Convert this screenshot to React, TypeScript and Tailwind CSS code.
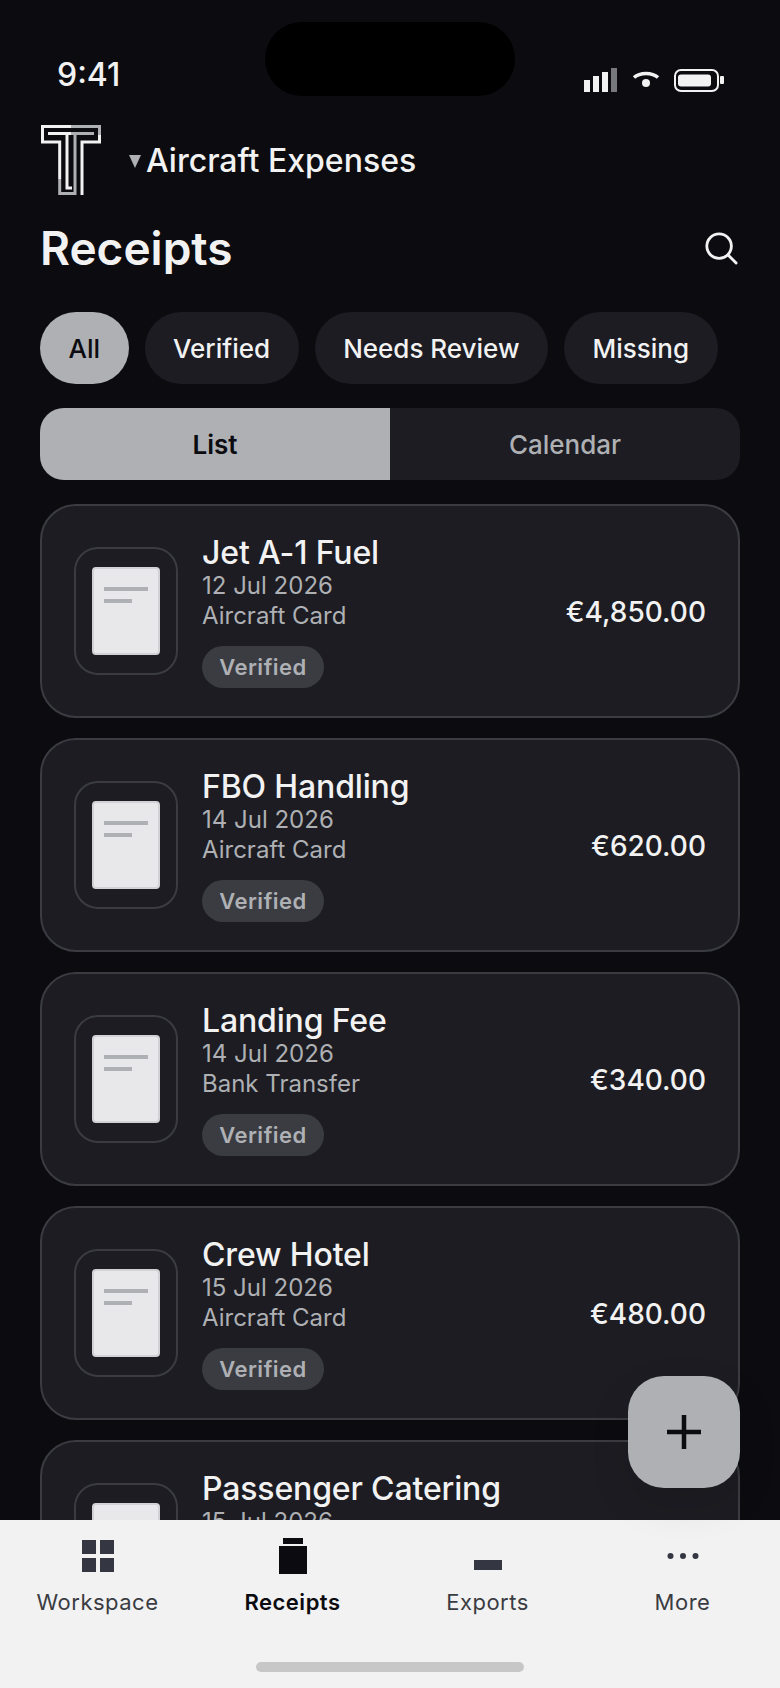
const font = { fontFamily: "Inter, 'Liberation Sans', sans-serif" };

type R = { title: string; date: string; method: string; amount: string };
const rows: R[] = [
  { title: "Jet A-1 Fuel", date: "12 Jul 2026", method: "Aircraft Card", amount: "€4,850.00" },
  { title: "FBO Handling", date: "14 Jul 2026", method: "Aircraft Card", amount: "€620.00" },
  { title: "Landing Fee", date: "14 Jul 2026", method: "Bank Transfer", amount: "€340.00" },
  { title: "Crew Hotel", date: "15 Jul 2026", method: "Aircraft Card", amount: "€480.00" },
  { title: "Passenger Catering", date: "15 Jul 2026", method: "Aircraft Card", amount: "€1,120.00" },
];

function Logo() {
  return (
    <svg width="60" height="70" viewBox="0 0 60 70" fill="none" strokeWidth="3" strokeLinecap="butt" className="ml-[1px]">
      <path d="M30 1.5H1.5V17H18.7V54" stroke="#f2f2f2" />
      <path d="M30 1.5H58.5V10" stroke="#aeb0b4" />
      <path d="M58.5 10V17H41V70" stroke="#f2f2f2" />
      <path d="M18.7 54V68.5H34V8.5" stroke="#aeb0b4" />
      <path d="M7 8.5H30" stroke="#f2f2f2" />
      <path d="M30 8.5H53" stroke="#aeb0b4" />
      <path d="M26 8.5V63H31" stroke="#f2f2f2" />
    </svg>
  );
}

function StatusIcons() {
  return (
    <svg width="142" height="28" viewBox="0 0 142 28" fill="none">
      <rect x="0" y="12" width="6" height="12" fill="#f2f2f2" />
      <rect x="9" y="8" width="6" height="16" fill="#f2f2f2" />
      <rect x="18" y="4" width="6" height="20" fill="#f2f2f2" />
      <rect x="27" y="0" width="6" height="24" fill="#77797d" />
      <path d="M50 9.5C56 4 68 4 74 9.5" stroke="#f2f2f2" strokeWidth="3.5" />
      <circle cx="62" cy="15" r="4" fill="#f2f2f2" />
      <rect x="91" y="2" width="43" height="21" rx="6" stroke="#f2f2f2" strokeWidth="2" />
      <rect x="94" y="6.5" width="33" height="12" rx="3" fill="#f2f2f2" />
      <rect x="136" y="8" width="4" height="8" rx="1" fill="#f2f2f2" />
    </svg>
  );
}

function Card({ r }: { r: R }) {
  return (
    <div className="flex items-center shrink-0 h-[214px] rounded-[36px] border-2 border-[#3a3c42] bg-[#1c1c22] pl-8 pr-8">
      <div className="flex items-center justify-center w-[104px] h-[128px] shrink-0 rounded-[24px] border-2 border-[#3a3c42]">
        <div className="w-[68px] h-[88px] rounded-[4px] border-2 border-[#d1d1d6] bg-[#e8e8ea] pt-[18px] pl-[10px]">
          <div className="w-[44px] h-[4px] bg-[#aeb0b4]" />
          <div className="w-[28px] h-[4px] bg-[#aeb0b4] mt-2" />
        </div>
      </div>
      <div className="ml-[24px] flex flex-col items-start pt-[1px]">
        <div className="text-[32px] leading-[36px] font-medium tracking-[-0.15px] text-[#f2f2f2]">{r.title}</div>
        <div className="text-[24px] leading-[30px] text-[#aeb0b4]">{r.date}</div>
        <div className="text-[24px] leading-[30px] text-[#aeb0b4]">{r.method}</div>
        <div className="mt-[15px] flex items-center justify-center w-[122px] h-[42px] pt-[1px] rounded-full bg-[#3a3c42] text-[22px] font-semibold tracking-[0.5px] text-[#aeb0b4]">
          Verified
        </div>
      </div>
      <div className="ml-auto mt-[2px] text-[28px] font-medium text-[#f2f2f2]">{r.amount}</div>
    </div>
  );
}

function Chip({ label, active }: { label: string; active?: boolean }) {
  return (
    <div
      className={
        active
          ? "h-[72px] flex items-center px-[28.5px] rounded-full bg-[#aeb0b4] text-[#0b0b10] text-[26px] font-medium"
          : "h-[72px] flex items-center px-[28.5px] rounded-full bg-[#1c1c22] text-[#f2f2f2] text-[26px] font-medium"
      }
    >
      {label}
    </div>
  );
}

function Tab({ label, active, icon }: { label: string; active?: boolean; icon: React.ReactNode }) {
  return (
    <div className="flex-1 flex flex-col items-center">
      <div className="h-[52px] flex items-center justify-center">{icon}</div>
      <div className={active ? "mt-[6px] text-[22px] leading-[28px] font-semibold tracking-[0.5px] text-[#0b0b10]" : "mt-[6px] text-[22px] leading-[28px] tracking-[0.5px] text-[#3a3c42]"}>
        {label}
      </div>
    </div>
  );
}

export default function App() {
  return (
    <div style={font} className="relative w-[780px] h-[1688px] overflow-hidden bg-[#0b0b10] flex flex-col">
      <div className="absolute left-[265px] top-[22px] w-[250px] h-[74px] rounded-full bg-black" />

      <div className="flex-1 min-h-0 overflow-hidden flex flex-col px-[40px]">
        <div className="flex items-start justify-between h-[125px] pt-[57px] pl-[17px] pr-[14px] shrink-0">
          <div className="text-[32px] leading-[36px] font-medium text-[#f2f2f2]">9:41</div>
          <div className="pt-[11px]"><StatusIcons /></div>
        </div>

        <div className="flex items-center shrink-0 h-[70px]">
          <Logo />
          <div className="ml-[28px] w-0 h-0 border-l-[6px] border-r-[6px] border-t-[13px] border-l-transparent border-r-transparent border-t-[#aeb0b4] mt-[3px]" />
          <div className="ml-[5px] text-[32px] font-medium text-[#f2f2f2] mt-[2px]">Aircraft Expenses</div>
        </div>

        <div className="flex items-center justify-between shrink-0 mt-[24px] h-[58px]">
          <div className="text-[46px] font-semibold text-[#f2f2f2]">Receipts</div>
          <svg width="34" height="34" viewBox="0 0 36 36" fill="none" stroke="#f2f2f2" strokeWidth="3" className="mr-[2px]">
            <circle cx="16" cy="16" r="13" />
            <path d="M25.5 25.5L34 34" strokeLinecap="round" />
          </svg>
        </div>

        <div className="flex gap-4 shrink-0 mt-[35px]">
          <Chip label="All" active />
          <Chip label="Verified" />
          <Chip label="Needs Review" />
          <Chip label="Missing" />
        </div>

        <div className="flex shrink-0 mt-[24px] h-[72px] rounded-[24px] overflow-hidden bg-[#1c1c22]">
          <div className="flex-1 flex items-center justify-center bg-[#aeb0b4] text-[26px] font-semibold text-[#0b0b10]">List</div>
          <div className="flex-1 flex items-center justify-center text-[26px] font-medium text-[#aeb0b4]">Calendar</div>
        </div>

        <div className="flex flex-col gap-5 mt-[24px]">
          {rows.map((r) => <Card key={r.title} r={r} />)}
        </div>
      </div>

      <div className="h-[168px] shrink-0 bg-[#f2f2f2] relative pt-[10px]">
        <div className="flex">
          <Tab label="Workspace" icon={
            <svg width="32" height="32" viewBox="0 0 32 32" fill="#343741">
              <rect x="0" y="0" width="14" height="14" /><rect x="18" y="0" width="14" height="14" />
              <rect x="0" y="18" width="14" height="14" /><rect x="18" y="18" width="14" height="14" />
            </svg>
          } />
          <Tab label="Receipts" active icon={
            <svg width="28" height="36" viewBox="0 0 28 36" fill="#0b0b10">
              <rect x="4" y="0" width="20" height="6" /><rect x="0" y="8" width="28" height="28" />
            </svg>
          } />
          <Tab label="Exports" icon={
            <svg width="28" height="32" viewBox="0 0 28 32" fill="#343741">
              <rect x="0" y="20" width="28" height="10" />
            </svg>
          } />
          <Tab label="More" icon={
            <svg width="32" height="32" viewBox="0 0 32 32" fill="#343741">
              <circle cx="3.5" cy="16" r="3" /><circle cx="16" cy="16" r="3" /><circle cx="28.5" cy="16" r="3" />
            </svg>
          } />
        </div>
        <div className="absolute left-[256px] top-[142px] w-[268px] h-[10px] rounded-full bg-[#c7c7c7]" />
      </div>

      <div className="absolute left-[628px] top-[1376px] w-[112px] h-[112px] rounded-[36px] bg-[#aeb0b4] flex items-center justify-center shadow-[0_16px_40px_rgba(0,0,0,0.1)]">
        <svg width="34" height="34" viewBox="0 0 34 34" stroke="#0b0b10" strokeWidth="4.5" fill="none">
          <path d="M17 0V34M0 17H34" />
        </svg>
      </div>
    </div>
  );
}
